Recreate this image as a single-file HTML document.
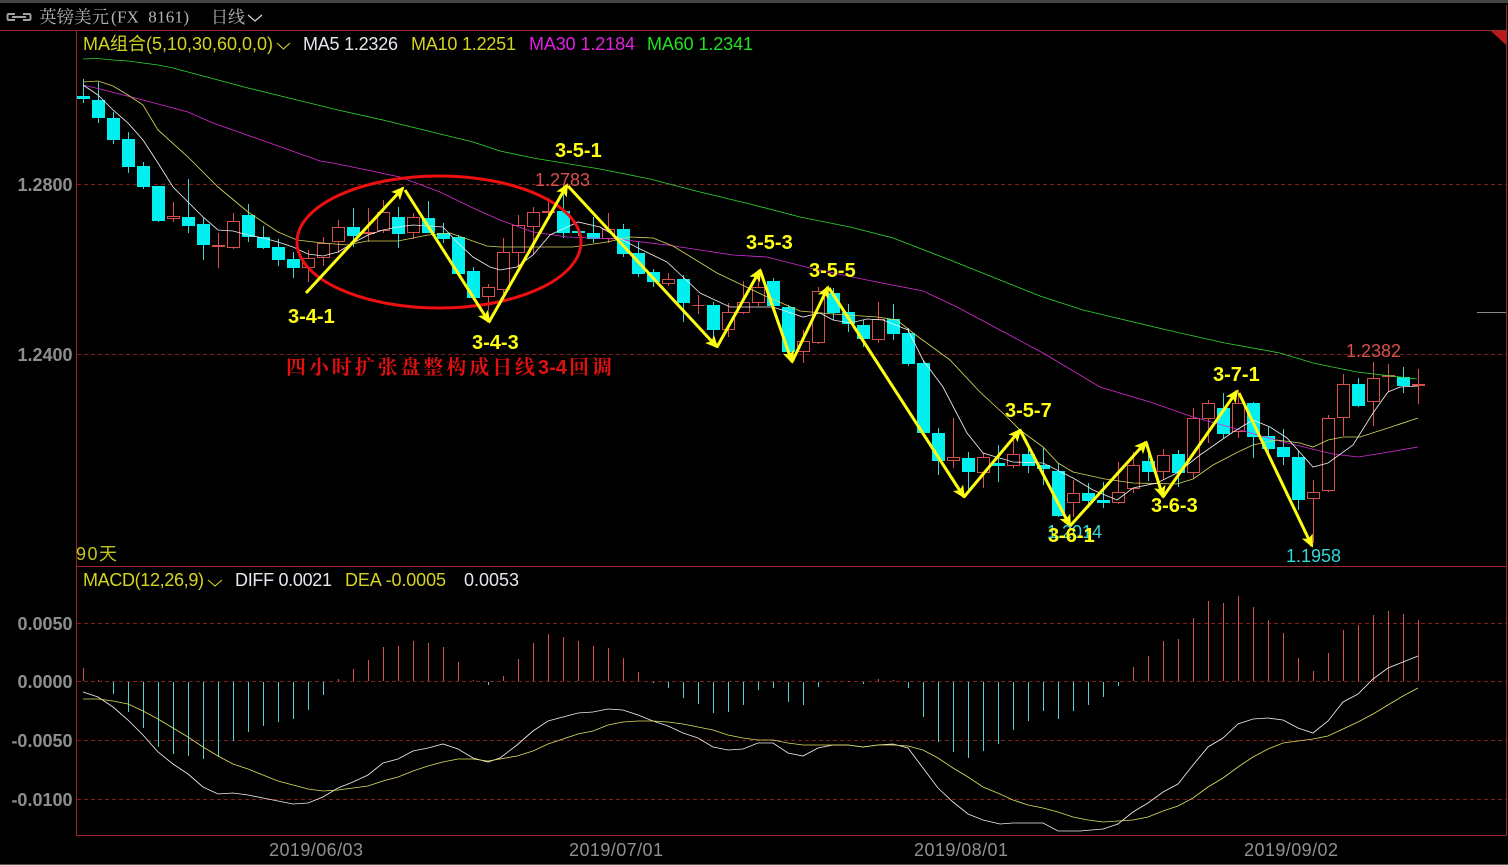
<!DOCTYPE html>
<html lang="zh"><head><meta charset="utf-8"><title>英镑美元</title>
<style>
html,body{margin:0;padding:0;background:#000;width:1508px;height:865px;overflow:hidden}
svg{display:block;position:absolute;left:0;top:0}
text{font-family:"Liberation Sans","Noto Sans CJK SC",sans-serif;font-size:18px}
.ax{fill:#8e8e8e;font-weight:bold;text-anchor:end}
.dt{fill:#909090}
.lb{fill:#ffff10;font-weight:bold;font-size:20px}
.ma{fill:none;stroke-width:.85}
.cz{font-family:"Liberation Serif","Noto Serif CJK SC",serif;font-weight:bold;font-size:20px;fill:#e01010;letter-spacing:2.9px}
</style></head><body>
<svg width="1508" height="865" viewBox="0 0 1508 865" xmlns="http://www.w3.org/2000/svg">
<defs><marker id="h" markerUnits="userSpaceOnUse" markerWidth="16" markerHeight="14" refX="11" refY="7" orient="auto"><path d="M0 1L13 7L0 13L3 7z" fill="#ffff10"/></marker></defs>
<rect x="0" y="0" width="1508" height="3" fill="#444"/>
<rect x="0" y="864" width="1508" height="1" fill="#555"/>

<!-- header -->
<path d="M15 14H9q-1.500 0-1.500 1.500v3q0 1.500 1.500 1.500h6M23 14h6q1.500 0 1.500 1.500v3q0 1.500-1.500 1.500h-6M12 17h14" fill="none" stroke="#a0a0a0" stroke-width="2"/>
<text x="39" y="23" style="font-family:'Noto Serif CJK SC',serif;font-size:17.5px;fill:#b4b4b4">英镑美元</text>
<text x="111" y="22.500" textLength="78" lengthAdjust="spacing" style="font-family:'Liberation Serif',serif;font-size:17px;fill:#b4b4b4" xml:space="preserve">(FX  8161)</text>
<text x="211" y="23" style="font-family:'Noto Serif CJK SC',serif;font-size:17px;fill:#b4b4b4">日线</text>
<path d="M248 15l7 6 7-6" fill="none" stroke="#ddd" stroke-width="1.2"/>

<!-- frame -->
<g shape-rendering="crispEdges" fill="none" stroke="#9c2626">
<path d="M0 30.5H1506.5M76.5 30.5V835.5M76.5 566.5H1506.5M76.5 835.5H1506.5M1506.5 5V835.5"/>
</g>
<path d="M1491 31H1506V45z" fill="#b81c1c"/>
<path d="M1477 312.5H1506" stroke="#8a8a8a" stroke-width="1" shape-rendering="crispEdges"/>
<g shape-rendering="crispEdges" stroke="#7e1d1d" stroke-dasharray="4 3" fill="none">
<path d="M77 184.5H1506M77 354.5H1506M77 623.5H1506M77 681.5H1506M77 740.5H1506M77 799.5H1506"/>
</g>

<!-- cyan wicks -->
<path shape-rendering="crispEdges" stroke="#3ad6d6" fill="none" d="M83.5 79V103M98.5 82V123M113.5 112V144M128.5 132V173M143.5 162V189M158.5 186V222M188.5 179V233M203.5 218V260M248.5 204V242M263.5 226V249M278.5 239V266M293.5 252V278M353.5 208V247M398.5 207V248M428.5 201V233M443.5 223V243M458.5 235V275M473.5 267V300M563.5 185V238M578.5 229V236M593.5 217V243M623.5 224V257M638.5 242V277M653.5 269V287M683.5 275V322M713.5 302V337M773.5 278V307M788.5 305V355M833.5 288V320M848.5 304V332M863.5 320V347M893.5 304V340M908.5 328V366M923.5 360V435M938.5 428V475M968.5 452V492M998.5 445V482M1028.5 445V473M1043.5 447V485M1058.5 463V517M1088.5 483V508M1103.5 482V508M1148.5 450V481M1178.5 450V487M1223.5 393V438M1253.5 402V458M1268.5 427V455M1283.5 429V465M1298.5 451V510M1358.5 378V407M1403.5 367V393"/>
<!-- cyan bodies -->
<path shape-rendering="crispEdges" fill="#00f0f0" d="M77 96h13V99h-13zM92 100h13V118h-13zM107 118h13V140h-13zM122 139h13V167h-13zM137 166h13V187h-13zM152 186h13V221h-13zM182 217h13V226h-13zM197 224h13V245h-13zM242 215h13V237h-13zM257 237h13V248h-13zM272 247h13V260h-13zM287 259h13V268h-13zM347 227h13V236h-13zM392 217h13V234h-13zM422 218h13V233h-13zM437 233h13V239h-13zM452 237h13V274h-13zM467 271h13V298h-13zM557 211h13V233h-13zM572 231h13V233h-13zM587 233h13V239h-13zM617 229h13V254h-13zM632 253h13V274h-13zM647 272h13V282h-13zM677 279h13V303h-13zM707 305h13V330h-13zM767 281h13V306h-13zM782 307h13V352h-13zM827 293h13V313h-13zM842 312h13V324h-13zM857 325h13V339h-13zM887 319h13V334h-13zM902 333h13V364h-13zM917 363h13V433h-13zM932 433h13V461h-13zM962 458h13V472h-13zM992 463h13V466h-13zM1022 454h13V466h-13zM1037 465h13V469h-13zM1052 471h13V516h-13zM1082 493h13V501h-13zM1097 500h13V503h-13zM1142 461h13V472h-13zM1172 454h13V473h-13zM1217 408h13V434h-13zM1247 403h13V437h-13zM1262 436h13V449h-13zM1277 447h13V457h-13zM1292 457h13V500h-13zM1352 384h13V406h-13zM1397 377h13V386h-13z"/>
<!-- red wicks -->
<path shape-rendering="crispEdges" stroke="#d8504c" fill="none" d="M173.5 202V222M218.5 233V268M233.5 213V249M308.5 250V282M323.5 237V266M338.5 220V253M368.5 208V242M383.5 200V233M413.5 213V239M488.5 284V310M503.5 238V300M518.5 215V270M533.5 207V255M548.5 198V215M608.5 213V243M668.5 273V286M698.5 295V314M728.5 303V337M743.5 281V314M758.5 270V306M803.5 330V363M818.5 287V344M878.5 302V343M953.5 418V468M983.5 453V488M1013.5 440V468M1073.5 480V517M1118.5 462V504M1133.5 452V493M1163.5 449V480M1193.5 408V479M1208.5 400V443M1238.5 390V438M1313.5 480V543M1328.5 415V492M1343.5 374V436M1373.5 362V426M1388.5 364V392M1418.5 369V404"/>
<!-- red bodies (hollow) -->
<path shape-rendering="crispEdges" stroke="#d8504c" fill="#000" d="M167.5 216.5h12v2h-12zM212.5 245.5h12v1h-12zM227.5 221.5h12v26h-12zM302.5 258.5h12v9h-12zM317.5 243.5h12v14h-12zM332.5 227.5h12v14h-12zM362.5 232.5h12v1h-12zM377.5 212.5h12v18h-12zM407.5 217.5h12v15h-12zM482.5 287.5h12v9h-12zM497.5 252.5h12v37h-12zM512.5 225.5h12v27h-12zM527.5 212.5h12v14h-12zM542.5 211.5h12v1h-12zM602.5 229.5h12v9h-12zM662.5 279.5h12v4h-12zM692.5 305.5h12v0h-12zM722.5 312.5h12v17h-12zM737.5 302.5h12v10h-12zM752.5 287.5h12v15h-12zM797.5 341.5h12v10h-12zM812.5 291.5h12v51h-12zM872.5 319.5h12v20h-12zM947.5 457.5h12v3h-12zM977.5 457.5h12v15h-12zM1007.5 454.5h12v11h-12zM1067.5 493.5h12v9h-12zM1112.5 492.5h12v10h-12zM1127.5 465.5h12v23h-12zM1157.5 455.5h12v16h-12zM1187.5 418.5h12v54h-12zM1202.5 403.5h12v15h-12zM1232.5 403.5h12v28h-12zM1307.5 492.5h12v6h-12zM1322.5 418.5h12v72h-12zM1337.5 384.5h12v33h-12zM1367.5 378.5h12v23h-12zM1382.5 375.5h12v1h-12zM1412.5 384.5h12v1h-12z"/>

<!-- MA lines -->
<polyline class="ma" stroke="#2fd82f" points="83,59 98,58.5 113,60 128,61 143,63 158,65 173,68 203,76 248,88 293,99 338,110 383,120 428,131 473,142 500,151 533,158 600,169 650,179 700,192 750,204 800,217 850,227 893,238 950,260 1000,280 1040,296 1083,310 1125,320 1167,330 1225,343 1280,353 1313,363 1357,372 1417,379"/>
<polyline class="ma" stroke="#d42cd4" points="83,85 100,89 143,100 188,112 213,123 267,142 320,161 333,163 400,177 440,192 473,208 500,220 533,232 567,237 617,239 667,245 733,255 767,257 810,268 867,280 923,291 957,307 1000,330 1043,353 1100,387 1150,402 1193,417 1233,428 1283,442 1333,454 1358,457 1383,453 1418,447"/>
<polyline class="ma" stroke="#d6d65a" points="83,82 98,81 113,86 128,95 143,105 158,130 188,157 218,187 248,212 278,232 297,240 323,243 347,245 367,241 398,241 428,235 450,233 487,246 500,247 533,247 573,247 607,242 630,237 653,238 673,246 717,273 763,295 800,311 833,314 877,317 897,320 913,333 950,360 980,392 1007,417 1020,430 1043,447 1058,463 1073,472 1105,479 1133,483 1177,484 1193,479 1213,465 1238,452 1253,445 1277,440 1300,443 1313,447 1328,440 1343,437 1360,437 1388,428 1418,418"/>
<polyline class="ma" stroke="#eeeeee" points="83,85 98,95 113,110 128,123 143,140 158,163 173,187 188,202 203,217 218,230 233,231 248,235 263,238 278,242 293,247 308,254 323,256 338,252 353,243 368,235 383,230 398,227 413,225 428,226 443,227 458,243 473,257 490,267 500,270 517,267 533,255 550,235 578,222 600,227 617,237 638,248 667,262 683,277 700,293 730,307 757,307 773,307 788,312 803,317 820,313 833,320 850,323 867,319 883,320 908,330 923,360 943,387 967,433 983,453 1013,462 1043,463 1073,478 1093,490 1117,500 1133,488 1157,483 1177,473 1200,455 1233,432 1253,420 1270,427 1287,438 1313,467 1328,463 1353,445 1373,413 1388,392 1400,387 1418,386"/>

<!-- ellipse -->
<ellipse cx="439" cy="242" rx="142" ry="66" fill="none" stroke="#ee1010" stroke-width="3"/>

<!-- arrows -->
<g fill="none" stroke="#ffff10" stroke-width="3">
<path marker-end="url(#h)" d="M306 293L403 188"/>
<path marker-end="url(#h)" d="M405 190L489 322"/>
<path marker-end="url(#h)" d="M489 322L567 185"/>
<path marker-end="url(#h)" d="M568 186L717 347"/>
<path marker-end="url(#h)" d="M717 347L760 270"/>
<path marker-end="url(#h)" d="M760 270L792 362"/>
<path marker-end="url(#h)" d="M792 362L828 287"/>
<path marker-end="url(#h)" d="M829 288L964 497"/>
<path marker-end="url(#h)" d="M964 497L1020 430"/>
<path marker-end="url(#h)" d="M1020 430L1070 526"/>
<path marker-end="url(#h)" d="M1070 526L1146 442"/>
<path marker-end="url(#h)" d="M1146 442L1163 497"/>
<path marker-end="url(#h)" d="M1163 497L1237 391"/>
<path marker-end="url(#h)" d="M1239 393L1312 546"/>
</g>

<!-- MACD histogram -->
<path shape-rendering="crispEdges" stroke="#d8504c" fill="none" d="M83.5 668V681M98.5 680V681M338.5 679V681M353.5 669V681M368.5 660V681M383.5 647V681M398.5 646V681M413.5 641V681M428.5 643V681M443.5 647V681M458.5 662V681M473.5 680V681M503.5 676V681M518.5 659V681M533.5 643V681M548.5 634V681M563.5 637V681M578.5 641V681M593.5 646V681M608.5 648V681M623.5 658V681M638.5 672V681M848.5 681V682M878.5 679V681M893.5 680V681M1133.5 667V681M1148.5 656V681M1163.5 641V681M1178.5 639V681M1193.5 618V681M1208.5 601V681M1223.5 603V681M1238.5 596V681M1253.5 607V681M1268.5 620V681M1283.5 633V681M1298.5 658V681M1313.5 671V681M1328.5 653V681M1343.5 630V681M1358.5 625V681M1373.5 615V681M1388.5 611V681M1403.5 614V681M1418.5 620V681"/>
<path shape-rendering="crispEdges" stroke="#4fd2d2" fill="none" d="M113.5 682V694M128.5 682V712M143.5 682V728M158.5 682V747M173.5 682V754M188.5 682V756M203.5 682V759M218.5 682V756M233.5 682V741M248.5 682V732M263.5 682V726M278.5 682V722M293.5 682V719M308.5 682V710M323.5 682V695M488.5 682V685M653.5 682V683M668.5 682V688M683.5 682V698M698.5 682V704M713.5 682V713M728.5 682V712M743.5 682V705M758.5 682V690M773.5 682V688M788.5 682V702M803.5 682V705M818.5 682V687M863.5 682V684M908.5 682V688M923.5 682V717M938.5 682V742M953.5 682V752M968.5 682V758M983.5 682V751M998.5 682V744M1013.5 682V730M1028.5 682V721M1043.5 682V711M1058.5 682V719M1073.5 682V711M1088.5 682V705M1103.5 682V697M1118.5 682V686"/>

<!-- DIFF / DEA -->
<polyline class="ma" stroke="#eeeeee" points="83,692 98,697 113,707 128,720 143,735 158,752 173,764 188,774 203,787 218,794 233,793 248,795 263,798 278,801 293,804 308,803 323,797 338,788 353,782 368,775 383,763 398,759 413,751 428,748 443,744 458,749 473,758 488,762 500,758 517,745 533,731 548,721 563,717 578,713 593,712 608,709 623,710 638,715 653,721 668,726 683,733 698,738 713,747 728,750 743,749 758,743 773,743 788,753 803,756 818,748 833,745 848,745 863,747 878,745 893,744 908,748 923,768 938,788 953,802 968,814 983,820 1000,824 1013,823 1043,823 1058,831 1080,831 1103,829 1118,824 1133,812 1148,803 1163,792 1178,784 1193,765 1208,747 1223,738 1238,724 1253,719 1268,718 1283,720 1298,728 1313,733 1328,721 1343,702 1358,694 1373,679 1388,668 1403,662 1418,656"/>
<polyline class="ma" stroke="#dede60" points="83,699 98,699 113,701 128,704 143,711 158,719 173,728 188,737 203,747 218,756 233,764 248,769 263,775 278,781 293,785 308,789 323,791 338,790 353,788 368,786 383,781 398,777 413,771 428,766 443,762 458,759 473,759 488,761 500,759 517,756 533,751 548,744 563,739 578,734 593,731 608,725 623,722 638,721 653,721 668,722 683,724 698,727 713,730 728,735 743,738 758,740 773,740 788,743 803,745 833,745 848,745 863,747 878,745 893,745 908,746 923,750 938,758 953,768 968,777 983,787 1000,794 1013,800 1028,805 1043,808 1058,812 1073,817 1088,820 1103,822 1118,821 1133,820 1148,817 1163,811 1178,806 1193,798 1208,787 1223,778 1238,767 1253,757 1268,749 1283,743 1298,741 1313,739 1328,736 1343,729 1358,722 1373,714 1388,705 1403,696 1418,688"/>

<!-- legend -->
<text x="83" y="50" fill="#d4d420" textLength="190">MA组合(5,10,30,60,0,0)</text>
<path d="M277 43l6.500 6 6.500-6" fill="none" stroke="#d4d420" stroke-width="1.100"/>
<text x="303" y="50" fill="#e6e6f0" textLength="95">MA5 1.2326</text>
<text x="411" y="50" fill="#d4d420" textLength="105">MA10 1.2251</text>
<text x="529" y="50" fill="#e020e0" textLength="106">MA30 1.2184</text>
<text x="647" y="50" fill="#20e020" textLength="106">MA60 1.2341</text>

<text x="83" y="586" fill="#d4d420" textLength="121">MACD(12,26,9)</text>
<path d="M208 580l7 6 7-6" fill="none" stroke="#d4d420" stroke-width="1.100"/>
<text x="235" y="586" fill="#e6e6f0" textLength="97">DIFF 0.0021</text>
<text x="345" y="586" fill="#d4d420" textLength="101">DEA -0.0005</text>
<text x="464" y="586" fill="#e6e6f0" textLength="55">0.0053</text>

<text x="76" y="560" fill="#c4c420" textLength="41">90天</text>

<!-- axis -->
<text class="ax" x="72.500" y="191">1.2800</text>
<text class="ax" x="72.500" y="361">1.2400</text>
<text class="ax" x="72.500" y="630">0.0050</text>
<text class="ax" x="72.500" y="688">0.0000</text>
<text class="ax" x="72.500" y="747">-0.0050</text>
<text class="ax" x="72.500" y="806">-0.0100</text>
<text class="dt" x="269" y="856" textLength="94">2019/06/03</text>
<text class="dt" x="569" y="856" textLength="94">2019/07/01</text>
<text class="dt" x="914" y="856" textLength="94">2019/08/01</text>
<text class="dt" x="1244" y="856" textLength="94">2019/09/02</text>

<!-- price labels -->
<text x="535" y="186" fill="#d8504c">1.2783</text>
<text x="1346" y="357" fill="#d8504c">1.2382</text>
<text x="1286" y="562" fill="#35d8d8">1.1958</text>
<text x="1047" y="538" fill="#35d8d8">1.2014</text>

<!-- annotations -->
<text class="lb" x="288" y="323">3-4-1</text>
<text class="lb" x="472" y="349">3-4-3</text>
<text class="lb" x="555" y="157">3-5-1</text>
<text class="lb" x="746" y="249">3-5-3</text>
<text class="lb" x="809" y="277">3-5-5</text>
<text class="lb" x="1005" y="417">3-5-7</text>
<text class="lb" x="1048" y="542">3-6-1</text>
<text class="lb" x="1151" y="512">3-6-3</text>
<text class="lb" x="1213" y="381">3-7-1</text>

<text class="cz" x="286" y="374">四小时扩张盘整构成日线</text>
<text x="538" y="374" style="font-weight:bold;font-size:20px;fill:#e01010">3-4</text>
<text class="cz" x="569" y="374">回调</text>
</svg>
</body></html>
